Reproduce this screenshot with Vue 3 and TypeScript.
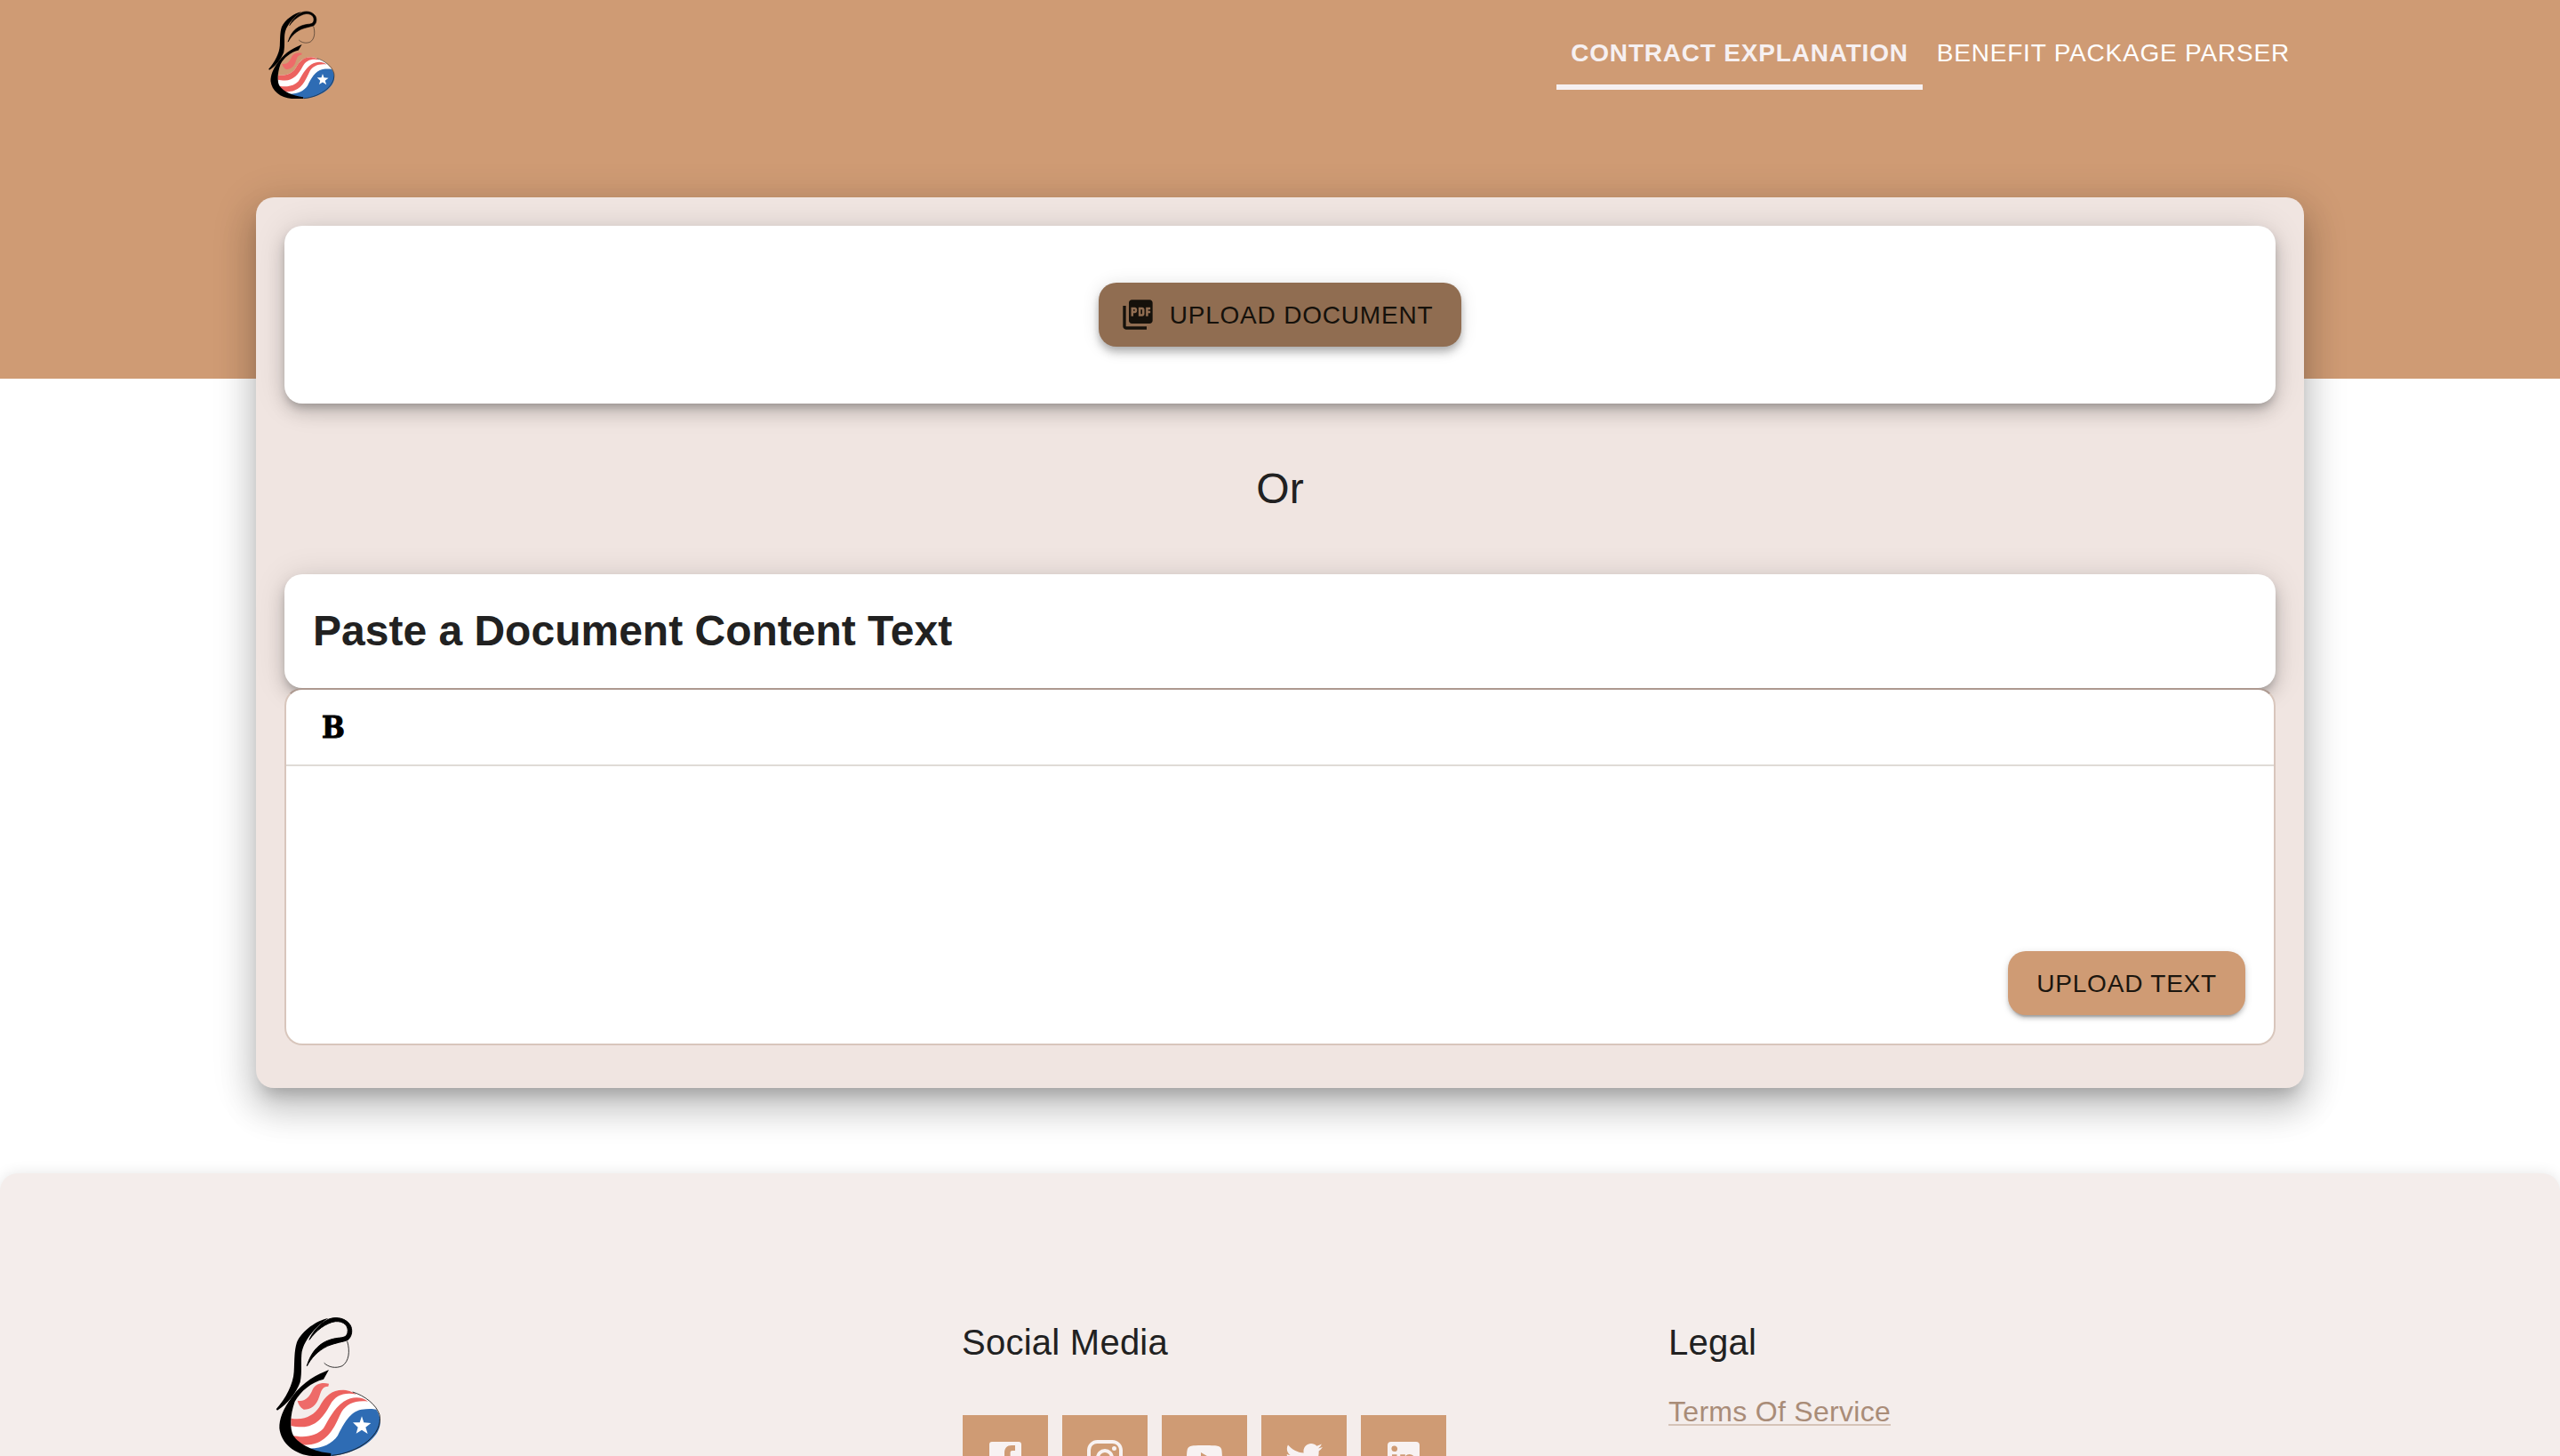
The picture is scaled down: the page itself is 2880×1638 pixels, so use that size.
<script setup lang="ts">
interface NavItem { label: string; active: boolean }
interface Social { name: string; path: string }

const nav: NavItem[] = [
  { label: 'Contract Explanation', active: true },
  { label: 'Benefit Package Parser', active: false },
]

const socials: Social[] = [
  {
    name: 'Facebook',
    path: 'M19.500 3H4.500A1.500 1.500 0 0 0 3 4.500v15A1.500 1.500 0 0 0 4.500 21H11.500v-7H9v-3H11.500V9.200C11.500 6.600 12.900 5 15.500 5h2v3h-1.500c-.9 0-1.200.4-1.200 1.300V11H17.500l-.4 3h-2.300v7h4.700a1.500 1.500 0 0 0 1.500-1.500v-15A1.500 1.500 0 0 0 19.500 3z',
  },
  {
    name: 'Instagram',
    path: 'M7.8 2h8.4C19.4 2 22 4.6 22 7.8v8.4a5.8 5.8 0 0 1-5.8 5.8H7.8C4.6 22 2 19.4 2 16.2V7.8A5.8 5.8 0 0 1 7.8 2m-.2 2A3.6 3.6 0 0 0 4 7.6v8.8C4 18.39 5.61 20 7.6 20h8.8a3.6 3.6 0 0 0 3.6-3.6V7.6C20 5.61 18.39 4 16.4 4H7.6m9.65 1.5a1.25 1.25 0 1 1 0 2.5 1.25 1.25 0 0 1 0-2.5M12 7a5 5 0 1 1 0 10 5 5 0 0 1 0-10m0 2a3 3 0 1 0 0 6 3 3 0 0 0 0-6z',
  },
  {
    name: 'YouTube',
    path: 'M10 15l5.19-3L10 9v6m11.56-7.83c.13.47.22 1.1.28 1.9.07.8.1 1.49.1 2.09L22 12c0 2.19-.16 3.8-.44 4.83-.25.9-.83 1.48-1.73 1.73-.47.13-1.33.22-2.65.28-1.3.07-2.49.1-3.59.1L12 19c-4.19 0-6.8-.16-7.83-.44-.9-.25-1.48-.83-1.73-1.73-.13-.47-.22-1.1-.28-1.9-.07-.8-.1-1.49-.1-2.09L2 12c0-2.19.16-3.8.44-4.83.25-.9.83-1.48 1.73-1.73.47-.13 1.33-.22 2.65-.28 1.3-.07 2.49-.1 3.59-.1L12 5c4.19 0 6.8.16 7.83.44.9.25 1.48.83 1.73 1.73z',
  },
  {
    name: 'Twitter',
    path: 'M22.46 6c-.77.35-1.6.58-2.46.69.88-.53 1.56-1.37 1.88-2.38-.83.5-1.75.85-2.72 1.05C18.37 4.5 17.26 4 16 4c-2.35 0-4.27 1.92-4.27 4.29 0 .34.04.67.11.98C8.28 9.09 5.11 7.38 3 4.79c-.37.63-.58 1.37-.58 2.15 0 1.49.75 2.81 1.91 3.56-.71 0-1.37-.2-1.95-.5v.03c0 2.08 1.48 3.82 3.44 4.21a4.22 4.22 0 0 1-1.93.07 4.28 4.28 0 0 0 4 2.98 8.521 8.521 0 0 1-5.33 1.84c-.34 0-.68-.02-1.02-.06C3.44 20.29 5.7 21 8.12 21 16 21 20.33 14.46 20.33 8.79c0-.19 0-.37-.01-.56.84-.6 1.56-1.36 2.14-2.23z',
  },
  {
    name: 'LinkedIn',
    path: 'M19 3a2 2 0 0 1 2 2v14a2 2 0 0 1-2 2H5a2 2 0 0 1-2-2V5a2 2 0 0 1 2-2h14m-.5 15.5v-5.3a3.26 3.26 0 0 0-3.26-3.26c-.85 0-1.84.52-2.32 1.3v-1.11h-2.79v8.37h2.79v-4.93c0-.77.62-1.4 1.39-1.4a1.4 1.4 0 0 1 1.4 1.4v4.93h2.79M6.88 8.56a1.68 1.68 0 0 0 1.68-1.68c0-.93-.75-1.69-1.68-1.69a1.69 1.69 0 0 0-1.69 1.69c0 .93.76 1.68 1.69 1.68m1.39 9.94v-8.37H5.5v8.37h2.77z',
  },
]
</script>

<template>
  <div class="page">
    <svg class="defs" width="0" height="0" aria-hidden="true">
      <defs>
        <symbol id="brand" viewBox="57 63 360 480">
          <path d="M112 407C160 415 190 395 207 370C228 330 250 311 290 311C335 315 378 340 402 378L350 400L260 500L165 512C140 500 120 480 112 464Z" fill="#fff" />
          <path d="M165 508C210 512 250 495 270 465C290 425 310 385 350 377C370 374 390 374 400 377C412 395 415 415 412 432C400 485 330 525 250 534C215 530 185 520 165 508Z" fill="#2e6cb4" />
          <path d="M112 407C160 415 190 395 207 370C228 330 250 310 290 311C310 312 325 320 333 326C290 318 262 330 245 360C220 405 195 435 150 436C135 436 120 434 112 432Z" fill="#ec625f" />
          <path d="M115 464C160 475 200 465 222 440C240 410 255 375 290 350C320 332 350 333 372 350C330 345 300 358 283 385C265 420 250 470 200 490C175 499 155 497 143 494C130 485 120 475 115 464Z" fill="#ec625f" />
          <path d="M134 347C160 352 175 335 185 310C195 290 215 285 240 290L238 299C215 300 215 315 207 335C198 365 175 378 155 377C143 370 136 358 134 347Z" fill="#ee6b69" />
          <path d="M320 318C360 330 400 360 411 395C425 460 340 525 250 532" fill="none" stroke="#111" stroke-width="2.500" />
          <path d="M351 400L358 421L382 423L364 437L371 459L351 446L332 458L338 437L321 421L344 421Z" fill="#fff" />
          <path d="M240 243C200 260 155 280 115 335C85 375 72 410 73 440C78 490 125 530 185 534L247 534V525C190 520 140 495 120 465C108 440 108 400 125 350C145 315 180 285 222 275Z" fill="#000" />
          <path d="M238 69C200 76 150 110 132 150C122 180 124 220 122 250C120 290 95 340 62 376L66 380C100 360 130 320 143 285C150 250 145 215 148 190C152 150 190 100 238 69Z" fill="#000" />
          <path d="M174 142C195 112 230 84 262 80C290 78 308 95 303 118C300 132 290 134 270 136C225 142 185 165 166 230C180 205 200 180 235 163C262 152 290 148 303 143C320 130 320 105 312 92C298 70 268 62 240 72C212 84 185 115 174 142Z" fill="#000" stroke="#000" stroke-width="3" />
          <path d="M302 147C312 180 308 215 285 230C262 240 238 234 224 220" fill="none" stroke="#111" stroke-width="2.500" />
        </symbol>
      </defs>
    </svg>

    <header class="banner">
      <div class="bar">
        <svg class="logo"><use href="#brand" /></svg>
        <nav class="nav">
          <a v-for="item in nav" :key="item.label" class="tab" :class="{ active: item.active }">{{ item.label }}</a>
        </nav>
      </div>
    </header>

    <main class="panel">
      <section class="paper drop">
        <button class="btn dark">
          <svg class="pdf" viewBox="0 0 24 24"><path d="M20 2H8c-1.100 0-2 .9-2 2v12c0 1.100.9 2 2 2h12c1.100 0 2-.9 2-2V4c0-1.100-.9-2-2-2zm-8.500 7.500c0 .83-.67 1.500-1.500 1.500H9v2H7.500V7H10c.83 0 1.500.67 1.500 1.500v1zm5 2c0 .83-.67 1.500-1.500 1.500h-2.500V7H15c.83 0 1.500.67 1.500 1.500v3zm4-3H19v1h1.500V11H19v2h-1.500V7h3v1.500zM9 9.500h1v-1H9v1zM4 6H2v14c0 1.100.9 2 2 2h14v-2H4V6zm10 5.500h1v-3h-1v3z" /></svg>
          <span>Upload Document</span>
        </button>
      </section>
      <p class="or">Or</p>
      <section class="paper heading"><h2>Paste a Document Content Text</h2></section>
      <section class="editor">
        <div class="tools"><span class="bold">B</span></div>
        <div class="content"><button class="btn"><span>Upload Text</span></button></div>
      </section>
    </main>

    <footer class="footer">
      <div class="brand"><svg class="mark"><use href="#brand" /></svg></div>
      <div class="social">
        <h3>Social Media</h3>
        <div class="tiles">
          <a v-for="s in socials" :key="s.name" class="tile" :aria-label="s.name">
            <svg viewBox="0 0 24 24"><path :d="s.path" fill-rule="evenodd" /></svg>
          </a>
        </div>
      </div>
      <div class="legal">
        <h3>Legal</h3>
        <a class="terms">Terms Of Service</a>
      </div>
    </footer>
  </div>
</template>

<style>
body { overflow: hidden; background: #fff; }
</style>

<style scoped>
* { box-sizing: border-box; }
.page {
  width: 2880px; height: 1638px; overflow: hidden;
  font-family: "Liberation Sans", Arial, sans-serif; color: #212121; background: #fff;
}
.defs { display: block; }
h2, h3, p { margin: 0; font-weight: 400; }
.banner { height: 426px; background: #cf9b74; }
.bar { display: flex; justify-content: space-between; padding: 0 288px; height: 128px; }
.logo { width: 76px; height: 101px; margin: 12px 0 0 13px; }
.nav { display: flex; }
.tab {
  display: flex; align-items: center; height: 101px; padding: 24px 16px 0;
  border-bottom: 6px solid transparent; color: #fff;
  font-size: 28px; letter-spacing: 0.8px; text-transform: uppercase; white-space: nowrap;
}
.tab.active { font-weight: 700; color: #f6f0f1; border-color: #f6f0f1; }
.panel {
  position: relative; width: 2304px; height: 1002px; margin: -204px auto 0; padding: 32px;
  display: flex; flex-direction: column; border-radius: 20px; background: #f0e5e1;
  box-shadow: 0 14px 18px -8px rgba(0,0,0,.2), 0 24px 38px 4px rgba(0,0,0,.14), 0 10px 46px 8px rgba(0,0,0,.12);
}
.paper {
  flex: none; border-radius: 20px; background: #fff;
  box-shadow: 0 6px 10px -2px rgba(0,0,0,.2), 0 10px 20px rgba(0,0,0,.14), 0 2px 36px rgba(0,0,0,.12);
}
.drop { height: 200px; display: flex; align-items: center; justify-content: center; }
.btn {
  display: flex; align-items: center; height: 72px; padding: 0 32px; border: 0; border-radius: 20px;
  background: #cf9b74; color: #1b160f; font: 400 28px/1 "Liberation Sans", Arial, sans-serif;
  letter-spacing: 0.8px; text-transform: uppercase; white-space: nowrap;
  box-shadow: 0 6px 2px -4px rgba(0,0,0,.2), 0 4px 4px rgba(0,0,0,.14), 0 2px 10px rgba(0,0,0,.12);
}
.btn span { padding-top: 2px; }
.btn.dark {
  padding-left: 24px; background: #906d51; color: #15110b;
  box-shadow: 0 4px 8px -2px rgba(0,0,0,.2), 0 8px 10px rgba(0,0,0,.14), 0 2px 20px rgba(0,0,0,.12);
}
.pdf { width: 40px; height: 40px; margin-right: 16px; fill: currentColor; }
.or { height: 192px; line-height: 192px; text-align: center; font-size: 48px; }
.heading { height: 128px; display: flex; align-items: center; padding: 0 32px; }
.heading h2 { font-size: 48px; font-weight: 700; line-height: 64px; }
.editor {
  height: 402px; display: flex; flex-direction: column;
  border: 2px solid #d8c6bc; border-top-color: #ad9990; border-radius: 20px; background: #fff;
}
.tools { height: 86px; border-bottom: 2px solid #dfdbd6; padding-left: 40px; display: flex; align-items: center; }
.bold {
  font: 700 34px/40px "DejaVu Serif Condensed", "DejaVu Serif", serif; font-stretch: condensed;
  color: #000; -webkit-text-stroke: 1px #000;
}
.content { flex: 1; display: flex; align-items: flex-end; justify-content: flex-end; padding: 0 32px 32px; }
.footer {
  display: flex; height: 318px; margin-top: 96px; padding: 160px 288px 0; border-radius: 20px 20px 0 0;
  background: #f4edeb; box-shadow: 0 0 16px rgba(0,0,0,.1);
}
.brand { width: 794px; }
.mark { width: 120px; height: 160px; margin-left: 21px; margin-top: 1px; }
.social { width: 795px; }
h3 { font-size: 40px; line-height: 60px; letter-spacing: 0.25px; }
.tiles { display: flex; gap: 16px; margin: 52px 0 0 1px; }
.tile { width: 96px; height: 96px; flex: none; display: flex; align-items: center; justify-content: center; background: #cf9b74; }
.tile svg { width: 48px; height: 48px; fill: #f8f2f2; }
.legal { display: flex; flex-direction: column; align-items: flex-start; }
.terms { margin-top: 28px; height: 36px; line-height: 41px; font-size: 32px; letter-spacing: 0.3px; color: #a98c78; border-bottom: 2px solid #d5c3b7; }
</style>
